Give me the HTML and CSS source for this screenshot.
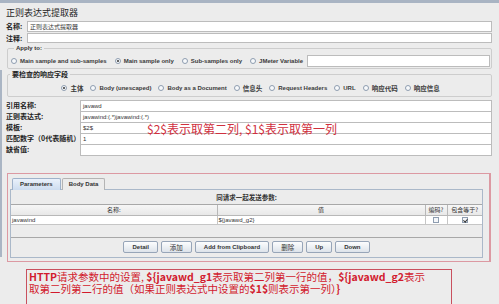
FILE: index.html
```html
<!DOCTYPE html>
<html lang="zh-CN">
<head>
<meta charset="utf-8">
<title>正则表达式提取器</title>
<link rel="stylesheet" href="styles.css">
</head>
<body>
<div class="app">
  <div class="title">正则表达式提取器</div>
  <div class="line name-line"><span class="lbl">名称:</span><div class="field cjk">正则表达式提取器</div></div>
  <div class="line note-line"><span class="lbl">注释:</span><div class="field"></div></div>

  <fieldset class="group apply">
    <legend>Apply to:</legend>
    <div class="radios">
      <span class="radio"><i class="dot"></i>Main sample and sub-samples</span>
      <span class="radio on"><i class="dot"></i>Main sample only</span>
      <span class="radio"><i class="dot"></i>Sub-samples only</span>
      <span class="radio"><i class="dot"></i>JMeter Variable</span>
      <div class="field var"></div>
    </div>
  </fieldset>

  <fieldset class="group check">
    <legend class="cjk-legend">要检查的响应字段</legend>
    <div class="radios centered">
      <span class="radio on cjk-r"><i class="dot"></i>主体</span>
      <span class="radio"><i class="dot"></i>Body (unescaped)</span>
      <span class="radio"><i class="dot"></i>Body as a Document</span>
      <span class="radio cjk-r"><i class="dot"></i>信息头</span>
      <span class="radio"><i class="dot"></i>Request Headers</span>
      <span class="radio"><i class="dot"></i>URL</span>
      <span class="radio cjk-r"><i class="dot"></i>响应代码</span>
      <span class="radio cjk-r"><i class="dot"></i>响应信息</span>
    </div>
  </fieldset>

  <div class="form">
    <div class="frow"><span class="flbl">引用名称:</span><div class="field">javawd</div></div>
    <div class="frow"><span class="flbl">正则表达式:</span><div class="field">javawind:(.*)javawind:(.*)</div></div>
    <div class="frow"><span class="flbl">模板:</span><div class="field">$2$</div></div>
    <div class="frow"><span class="flbl">匹配数字（0代表随机）:</span><div class="field">1</div></div>
    <div class="frow last"><span class="flbl">缺省值:</span><div class="field"></div></div>
    <div class="hint">$2$表示取第二列, $1$表示取第一列</div>
  </div>

  <div class="annot">
    <div class="tabs">
      <span class="tab sel">Parameters</span>
      <span class="tab">Body Data</span>
    </div>
    <div class="panel">
      <div class="caption">同请求一起发送参数:</div>
      <div class="tablewrap">
        <table class="params">
          <colgroup>
            <col class="c-name"><col class="c-val"><col class="c-enc"><col class="c-eq">
          </colgroup>
          <thead>
            <tr><th>名称:</th><th>值</th><th>编码?</th><th>包含等于?</th></tr>
          </thead>
          <tbody>
            <tr>
              <td class="txt">javawind</td>
              <td class="txt">${javawd_g2}</td>
              <td class="cb"><i class="box"></i></td>
              <td class="cb"><i class="box checked"></i></td>
            </tr>
          </tbody>
        </table>
      </div>
      <div class="buttons">
        <span class="btn">Detail</span>
        <span class="btn cjk-b">添加</span>
        <span class="btn">Add from Clipboard</span>
        <span class="btn cjk-b">删除</span>
        <span class="btn">Up</span>
        <span class="btn">Down</span>
      </div>
    </div>
  </div>

  <div class="note"><span class="lat">HTTP</span>请求参数中的设置, <span class="lat">${javawd_g1</span>表示取第二列第一行的值，<span class="lat">${javawd_g2</span>表示<br>取第二列第二行的值（如果正则表达式中设置的<span class="lat">$1$</span>则表示第一列）<span class="lat">}</span></div>
</div>
</body>
</html>
```

FILE: styles.css
```css
* { box-sizing: border-box; }
html, body { margin: 0; padding: 0; }
body {
  background: #ececec;
  width: 499px;
  height: 304px;
  overflow: hidden;
  font-family: "Liberation Sans", "Noto Sans CJK SC", sans-serif;
  color: #2b2b2b;
}
.app {
  position: relative;
  height: 304px;
  border-top: 3px solid #a9b4c3;
  padding: 0 7px 0 6px;
}
.app::before {
  content: "";
  position: absolute;
  left: 0;
  top: 67px;
  width: 2px;
  height: 187px;
  background: #aab5c4;
}
.title {
  font-family: "Noto Sans CJK SC", sans-serif;
  font-size: 9px;
  line-height: 12px;
  height: 16px;
  padding-top: 4px;
  color: #1e1e1e;
}
.line { display: flex; align-items: stretch; }
.name-line { margin-top: 2px; height: 11px; }
.note-line { margin-top: 1px; height: 10px; }
.lbl {
  font-family: "Noto Sans CJK SC", sans-serif;
  font-weight: 700;
  font-size: 7px;
  line-height: 10px;
  width: 21px;
  color: #222;
}
.field {
  flex: 1;
  background: #fff;
  border: 1px solid #bcbcbc;
  font-size: 6px;
  line-height: 9px;
  padding-left: 2px;
  color: #333;
  white-space: nowrap;
}
.field.cjk { font-family: "Noto Sans CJK SC", sans-serif; }

.group {
  margin: 1px 0 0 1px;
  padding: 0 1px 0 3px;
  border: 1px solid #cdcdcd;
  border-radius: 2px;
}
.group legend {
  font-size: 6px;
  font-weight: 700;
  line-height: 8px;
  padding: 0 2px;
  margin-left: 3px;
  color: #333;
}
.group legend.cjk-legend {
  font-family: "Noto Sans CJK SC", sans-serif;
  font-size: 7px;
  margin-left: -1px;
  color: #222;
}
.radios {
  display: flex;
  align-items: center;
  height: 12px;
  gap: 8px;
  font-size: 6px;
  font-weight: 700;
  color: #3a3a3a;
}
.apply .radios { margin: 3px 0 1px; }
.check { margin-bottom: 3px; }
.check .radios { margin: 4px 0 2px; justify-content: center; gap: 7px; }
.radio { display: flex; align-items: center; white-space: nowrap; }
.radio.cjk-r { font-family: "Noto Sans CJK SC", sans-serif; font-size: 6.5px; }
.dot {
  display: inline-block;
  width: 6px;
  height: 6px;
  border-radius: 50%;
  border: 1px solid #8e9db0;
  background: #f7f9fb;
  margin-right: 3px;
  position: relative;
}
.radio.on .dot::after {
  content: "";
  position: absolute;
  left: 1px; top: 1px;
  width: 2px; height: 2px;
  border-radius: 50%;
  background: #333;
}
.field.var { height: 12px; margin-left: -4px; }

.form { position: relative; }
.frow { display: flex; height: 11px; }
.flbl {
  width: 74px;
  font-family: "Noto Sans CJK SC", sans-serif;
  font-weight: 700;
  font-size: 7px;
  line-height: 11px;
  color: #222;
  white-space: nowrap;
}
.frow .field { border-bottom: none; line-height: 10px; }
.frow.last .field { border-bottom: 1px solid #bcbcbc; height: 12px; }
.hint {
  position: absolute;
  left: 141px;
  top: 22px;
  font-family: "Noto Sans CJK SC", sans-serif;
  font-size: 12px;
  line-height: 14px;
  color: #d0303e;
  white-space: nowrap;
}

.annot {
  margin: 18px 1px 0 1px;
  height: 89px;
  border: 1px solid #dc99a2;
  border-right-width: 2px;
  padding: 4px 6px 0 2px;
}
.tabs { display: flex; gap: 1px; padding-left: 2px; height: 12px; position: relative; z-index: 1; }
.tab {
  height: 12px;
  font-size: 6px;
  font-weight: 700;
  line-height: 11px;
  padding: 0 6px;
  border: 1px solid #b4b4b4;
  border-bottom: none;
  border-radius: 2px 2px 0 0;
  background: #ececec;
  color: #333;
}
.tab.sel {
  background: linear-gradient(#eaf1fb, #cddcef);
  border-color: #9fb2ca;
  padding: 0 7px;
}
.panel {
  margin-top: -1px;
  height: 69px;
  border: 1px solid #aab8c9;
  display: flex;
  flex-direction: column;
}
.caption {
  height: 14px;
  text-align: center;
  font-family: "Noto Sans CJK SC", sans-serif;
  font-size: 6.5px;
  font-weight: 700;
  line-height: 15px;
  color: #333;
  padding-left: 0;
}
.tablewrap {
  height: 34px;
  border-top: 1px solid #a8a8a8;
  border-bottom: 1px solid #a8a8a8;
}
.params {
  width: 100%;
  border-collapse: collapse;
  table-layout: fixed;
}
.c-name { width: 206px; }
.c-val { width: 208px; }
.c-enc { width: 22px; }
.c-eq { width: 35px; }
.params th {
  height: 10px;
  padding: 0;
  font-family: "Noto Sans CJK SC", sans-serif;
  font-size: 6px;
  font-weight: 400;
  line-height: 9px;
  color: #333;
  background: linear-gradient(#f6f6f6, #e8e8e8);
  border-right: 1px solid #b8b8b8;
  border-bottom: 1px solid #b8b8b8;
}
.params th:last-child, .params td:last-child { border-right: none; }
.params td {
  height: 9px;
  padding: 0 0 0 1px;
  background: #fff;
  font-size: 6px;
  line-height: 8px;
  color: #333;
  border-right: 1px solid #c6c6c6;
  border-bottom: 1px solid #c6c6c6;
  white-space: nowrap;
  overflow: hidden;
}
.params td.cb { text-align: center; padding: 0; }
.box {
  display: inline-block;
  width: 6px;
  height: 6px;
  border: 1px solid #8e9db0;
  background: #f4f6f9;
  vertical-align: middle;
  position: relative;
}
.box.checked::after {
  content: "";
  position: absolute;
  left: 1px; top: 0;
  width: 1.5px; height: 3px;
  border: solid #333;
  border-width: 0 1px 1px 0;
  transform: rotate(40deg);
}
.buttons {
  display: flex;
  justify-content: center;
  gap: 3px;
  margin-top: 3px;
}
.btn {
  height: 12px;
  padding: 0 8px;
  font-size: 6px;
  font-weight: 700;
  line-height: 10px;
  color: #333;
  border: 1px solid #97a5b8;
  border-radius: 2px;
  background: linear-gradient(#fcfdfe, #dde3ea);
  white-space: nowrap;
}
.btn.cjk-b { font-family: "Noto Sans CJK SC", sans-serif; font-size: 6.5px; font-weight: 400; }

.note {
  margin: 7px 0 0 20px;
  width: 426px;
  height: 40px;
  border: 1px solid #c9505e;
  padding: 1px 0 0 2px;
  font-family: "Noto Sans CJK SC", sans-serif;
  font-size: 10.5px;
  line-height: 11.5px;
  color: #d21a2d;
  white-space: nowrap;
}
.note .lat { font-weight: 700; }
```
